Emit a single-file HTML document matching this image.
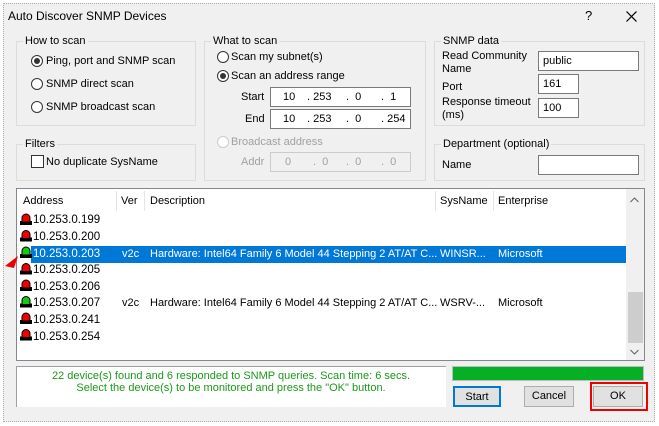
<!DOCTYPE html>
<html><head><style>
*{box-sizing:border-box;margin:0;padding:0}
body{width:659px;height:426px;background:#fff;font-family:"Liberation Sans",sans-serif;font-size:11px;color:#000;position:relative;overflow:hidden}
.a{position:absolute;white-space:nowrap}
.dlg{position:absolute;left:3px;top:3px;width:652px;height:419px;background:#f0f0f0;border:1px dotted #aaa}
.gb{position:absolute;border:1px solid #dcdcdc}
.gl{position:absolute;background:#f0f0f0;padding:0 2px;top:-7px;left:6px;line-height:13px}
.rb{position:absolute;width:12px;height:12px;border:1px solid #333;border-radius:50%;background:#fff}
.rb.on::after{content:"";position:absolute;left:2px;top:2px;width:6px;height:6px;border-radius:50%;background:#333}
.tb{position:absolute;background:#fff;border:1px solid #7a7a7a;line-height:20px;padding-left:4px}
.ip{position:absolute;background:#fff;border:1px solid #7a7a7a;height:20px}
.ip span{position:absolute;top:3px}
.btn{position:absolute;height:21px;background:#e1e1e1;border:1px solid #adadad;text-align:center;line-height:19px}
</style></head><body>
<div class="dlg"></div>
<div class="a" style="left:8px;top:9px;font-size:12px">Auto Discover SNMP Devices</div>
<div class="a" style="left:585px;top:8px;font-size:13px">?</div>
<svg class="a" style="left:626px;top:11px" width="11" height="11"><path d="M0.5 0.5L10.5 10.5M10.5 0.5L0.5 10.5" stroke="#000" stroke-width="1.2"/></svg>

<div class="gb" style="left:16px;top:41px;width:180px;height:85px"><div class="gl">How to scan</div></div>
<div class="rb on" style="left:31px;top:55px"></div><div class="a" style="left:46px;top:55px">Ping, port and SNMP scan</div>
<div class="rb" style="left:31px;top:78px"></div><div class="a" style="left:46px;top:78px">SNMP direct scan</div>
<div class="rb" style="left:31px;top:101px"></div><div class="a" style="left:46px;top:101px">SNMP broadcast scan</div>

<div class="gb" style="left:16px;top:144px;width:180px;height:37px"><div class="gl">Filters</div></div>
<div class="a" style="left:31px;top:155px;width:13px;height:13px;border:1px solid #333;background:#fff"></div>
<div class="a" style="left:46px;top:156px">No duplicate SysName</div>

<div class="gb" style="left:204px;top:41px;width:222px;height:140px"><div class="gl">What to scan</div></div>
<div class="rb" style="left:217px;top:51px"></div><div class="a" style="left:231px;top:51px">Scan my subnet(s)</div>
<div class="rb on" style="left:217px;top:70px"></div><div class="a" style="left:231px;top:70px">Scan an address range</div>
<div class="a" style="left:241px;top:91px">Start</div>
<div class="ip" style="left:270px;top:87px;width:141px"><span style="left:12px">10</span><span style="left:36px">. 253</span><span style="left:75px">.&nbsp; 0</span><span style="left:110px">.&nbsp; 1</span></div>
<div class="a" style="left:245px;top:113px">End</div>
<div class="ip" style="left:270px;top:109px;width:141px"><span style="left:12px">10</span><span style="left:36px">. 253</span><span style="left:75px">.&nbsp; 0</span><span style="left:110px">. 254</span></div>
<div class="rb" style="left:217px;top:136px;border-color:#ccc"></div><div class="a" style="left:231px;top:136px;color:#a0a0a0">Broadcast address</div>
<div class="a" style="left:241px;top:156px;color:#a0a0a0">Addr</div>
<div class="ip" style="left:270px;top:152px;width:141px;background:#f0f0f0;border-color:#ccc;color:#a0a0a0"><span style="left:14px">0</span><span style="left:42px">.&nbsp; 0</span><span style="left:75px">.&nbsp; 0</span><span style="left:110px">.&nbsp; 0</span></div>

<div class="gb" style="left:434px;top:41px;width:211px;height:85px"><div class="gl">SNMP data</div></div>
<div class="a" style="left:442px;top:50px;line-height:13px">Read Community<br>Name</div>
<div class="tb" style="left:538px;top:51px;width:101px;height:20px;line-height:18px">public</div>
<div class="a" style="left:442px;top:81px">Port</div>
<div class="tb" style="left:538px;top:74px;width:41px;height:20px;line-height:18px">161</div>
<div class="a" style="left:442px;top:96px;line-height:13px">Response timeout<br>(ms)</div>
<div class="tb" style="left:538px;top:98px;width:41px;height:20px;line-height:18px">100</div>

<div class="gb" style="left:434px;top:144px;width:211px;height:37px"><div class="gl">Department (optional)</div></div>
<div class="a" style="left:442px;top:159px">Name</div>
<div class="tb" style="left:538px;top:155px;width:101px;height:20px"></div>

<div class="a" style="left:16px;top:188px;width:629px;height:173px;background:#fff;border:1px solid #828790"></div>
<div class="a" style="left:23px;top:195px">Address</div>
<div class="a" style="left:116px;top:191px;width:1px;height:20px;background:#e5e5e5"></div>
<div class="a" style="left:121px;top:195px">Ver</div>
<div class="a" style="left:144px;top:191px;width:1px;height:20px;background:#e5e5e5"></div>
<div class="a" style="left:150px;top:195px">Description</div>
<div class="a" style="left:435px;top:191px;width:1px;height:20px;background:#e5e5e5"></div>
<div class="a" style="left:440px;top:195px">SysName</div>
<div class="a" style="left:493px;top:191px;width:1px;height:20px;background:#e5e5e5"></div>
<div class="a" style="left:498px;top:195px">Enterprise</div>
<div class="a" style="left:626px;top:189px;width:18px;height:171px;background:#f0f0f0"></div>
<div class="a" style="left:628px;top:292px;width:15px;height:51px;background:#cdcdcd"></div>
<svg class="a" style="left:630px;top:197px" width="9" height="6"><path d="M0.5 5L4.5 1 8.5 5" fill="none" stroke="#606060"/></svg>
<svg class="a" style="left:630px;top:349px" width="9" height="6"><path d="M0.5 1L4.5 5 8.5 1" fill="none" stroke="#606060"/></svg>

<div class="a" style="left:31px;top:246px;width:595px;height:17px;background:#0078d7"></div>
<svg class="a" style="left:19px;top:213px" width="14" height="135">
<g stroke="#000" stroke-width="1">
<g transform="translate(0,0)"><rect x="1.5" y="8.5" width="11" height="3" fill="#000"/><path d="M3 9v-4a4 4 0 0 1 8 0v4z" fill="#e00"/></g>
<g transform="translate(0,16.5)"><rect x="1.5" y="8.5" width="11" height="3" fill="#000"/><path d="M3 9v-4a4 4 0 0 1 8 0v4z" fill="#e00"/></g>
<g transform="translate(0,33)"><rect x="1.5" y="8.5" width="11" height="3" fill="#000"/><path d="M3 9v-4a4 4 0 0 1 8 0v4z" fill="#1c1"/></g>
<g transform="translate(0,49.5)"><rect x="1.5" y="8.5" width="11" height="3" fill="#000"/><path d="M3 9v-4a4 4 0 0 1 8 0v4z" fill="#e00"/></g>
<g transform="translate(0,66)"><rect x="1.5" y="8.5" width="11" height="3" fill="#000"/><path d="M3 9v-4a4 4 0 0 1 8 0v4z" fill="#e00"/></g>
<g transform="translate(0,82.5)"><rect x="1.5" y="8.5" width="11" height="3" fill="#000"/><path d="M3 9v-4a4 4 0 0 1 8 0v4z" fill="#1c1"/></g>
<g transform="translate(0,99)"><rect x="1.5" y="8.5" width="11" height="3" fill="#000"/><path d="M3 9v-4a4 4 0 0 1 8 0v4z" fill="#e00"/></g>
<g transform="translate(0,115.5)"><rect x="1.5" y="8.5" width="11" height="3" fill="#000"/><path d="M3 9v-4a4 4 0 0 1 8 0v4z" fill="#e00"/></g>
</g></svg>
<svg class="a" style="left:5px;top:256px" width="14" height="12"><path d="M0 10L13 0 9 12z" fill="#e00"/></svg>
<div class="a" style="left:33px;top:214px;font-size:11.5px">10.253.0.199</div>
<div class="a" style="left:33px;top:231px;font-size:11.5px">10.253.0.200</div>
<div class="a" style="left:33px;top:248px;color:#fff;font-size:11.5px">10.253.0.203</div>
<div class="a" style="left:122px;top:248px;color:#fff">v2c</div>
<div class="a" style="left:150px;top:248px;color:#fff">Hardware: Intel64 Family 6 Model 44 Stepping 2 AT/AT C...</div>
<div class="a" style="left:440px;top:248px;color:#fff">WINSR...</div>
<div class="a" style="left:498px;top:248px;color:#fff">Microsoft</div>
<div class="a" style="left:33px;top:264px;font-size:11.5px">10.253.0.205</div>
<div class="a" style="left:33px;top:281px;font-size:11.5px">10.253.0.206</div>
<div class="a" style="left:33px;top:297px;font-size:11.5px">10.253.0.207</div>
<div class="a" style="left:122px;top:297px">v2c</div>
<div class="a" style="left:150px;top:297px">Hardware: Intel64 Family 6 Model 44 Stepping 2 AT/AT C...</div>
<div class="a" style="left:440px;top:297px">WSRV-...</div>
<div class="a" style="left:498px;top:297px">Microsoft</div>
<div class="a" style="left:33px;top:314px;font-size:11.5px">10.253.0.241</div>
<div class="a" style="left:33px;top:331px;font-size:11.5px">10.253.0.254</div>

<div class="a" style="left:16px;top:366px;width:430px;height:41px;background:#fff;border-top:1px solid #a0a0a0;border-left:1px solid #a0a0a0"></div>
<div class="a" style="left:16px;top:370px;width:430px;text-align:center;color:#1a9a1a;line-height:12px">22 device(s) found and 6 responded to SNMP queries. Scan time: 6 secs.<br>Select the device(s) to be monitored and press the "OK" button.</div>

<div class="a" style="left:452px;top:366px;width:192px;height:15px;background:#06b025;border:1px solid #bcbcbc"></div>
<div class="btn" style="left:453px;top:386px;width:48px;border:2px solid #0078d7">Start</div>
<div class="btn" style="left:524px;top:386px;width:50px">Cancel</div>
<div class="btn" style="left:593px;top:386px;width:50px">OK</div>
<div class="a" style="left:590px;top:382px;width:58px;height:29px;border:2px solid #e00"></div>
</body></html>
